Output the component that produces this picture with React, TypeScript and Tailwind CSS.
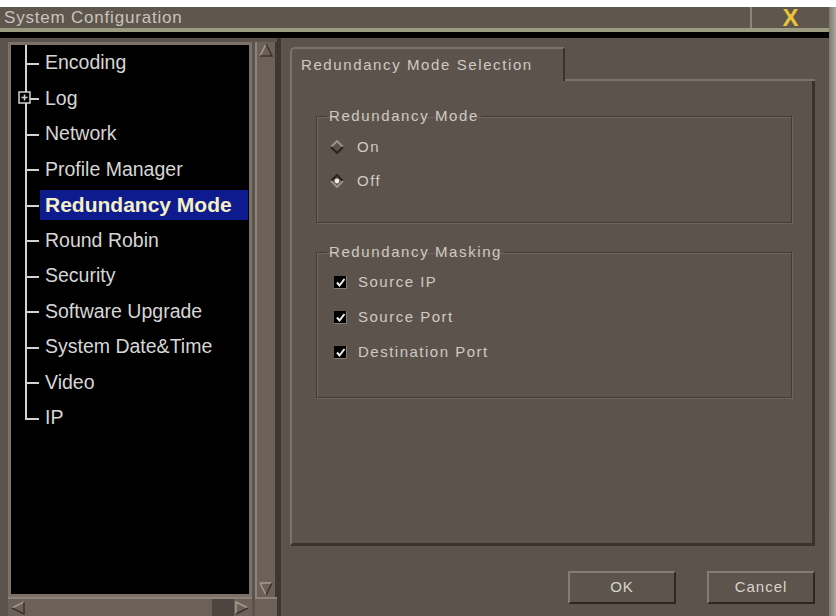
import React from "react";

const treeItems = [
  "Encoding",
  "Log",
  "Network",
  "Profile Manager",
  "Redundancy Mode",
  "Round Robin",
  "Security",
  "Software Upgrade",
  "System Date&Time",
  "Video",
  "IP",
];

const SELECTED = "Redundancy Mode";

function TreeRow({ label, last }: { label: string; last: boolean }) {
  const selected = label === SELECTED;
  return (
    <div className="flex items-center h-[35.5px]">
      <div className="relative w-[29px] h-full shrink-0">
        <span
          className={`absolute left-[14px] top-0 w-[2px] bg-[#d2d2d2] ${last ? "h-1/2" : "h-full"}`}
        />
        <span className="absolute left-[14px] top-1/2 w-[14px] h-[2px] bg-[#d2d2d2]" />
        {label === "Log" && (
          <svg
            className="absolute left-[7px] top-1/2 -translate-y-1/2"
            width="14"
            height="14"
            viewBox="0 0 14 14"
          >
            <rect x="1" y="1" width="11" height="11" fill="#000" stroke="#d2d2d2" strokeWidth="1.5" />
            <path d="M3.5 6.5h6M6.5 3.5v6" stroke="#d2d2d2" strokeWidth="1.5" />
          </svg>
        )}
      </div>
      <div
        className={`flex-1 h-[30px] flex items-center pl-[5px] mr-[1px] whitespace-nowrap ${
          selected
            ? "bg-[#0d1b8f] text-[#f4f0c4] font-bold text-[21px]"
            : "text-[#d6d6d6] text-[19.5px]"
        }`}
      >
        {label}
      </div>
    </div>
  );
}

function ArrowUp() {
  return (
    <svg width="14" height="14" viewBox="0 0 14 14">
      <path d="M1 13 L7 1" stroke="#a59a90" strokeWidth="1.5" fill="none" />
      <path d="M7 1 L13 13 L1 13" stroke="#3b332d" strokeWidth="1.5" fill="none" />
    </svg>
  );
}

function ArrowDown() {
  return (
    <svg width="14" height="14" viewBox="0 0 14 14">
      <path d="M1 1 L13 1 M1 1 L7 13" stroke="#a59a90" strokeWidth="1.5" fill="none" />
      <path d="M7 13 L13 1" stroke="#3b332d" strokeWidth="1.5" fill="none" />
    </svg>
  );
}

function ArrowLeft() {
  return (
    <svg width="14" height="14" viewBox="0 0 14 14">
      <path d="M13 1 L1 7" stroke="#a59a90" strokeWidth="1.5" fill="none" />
      <path d="M1 7 L13 13 L13 1" stroke="#3b332d" strokeWidth="1.5" fill="none" />
    </svg>
  );
}

function ArrowRight() {
  return (
    <svg width="14" height="14" viewBox="0 0 14 14">
      <path d="M1 13 L1 1 L13 7" stroke="#a59a90" strokeWidth="1.5" fill="none" />
      <path d="M13 7 L1 13" stroke="#3b332d" strokeWidth="1.5" fill="none" />
    </svg>
  );
}

function Diamond({ checked }: { checked: boolean }) {
  const top = checked ? "#2a231e" : "#9c9187";
  const bottom = checked ? "#9c9187" : "#2a231e";
  return (
    <svg width="14" height="14" viewBox="0 0 14 14">
      <path d="M1 7 L7 1 L13 7" stroke={top} strokeWidth="2" fill="none" />
      <path d="M1 7 L7 13 L13 7" stroke={bottom} strokeWidth="2" fill="none" />
      {checked && <circle cx="7" cy="7" r="2.4" fill="#ecebe6" />}
    </svg>
  );
}

function CheckBox() {
  return (
    <span className="w-[13px] h-[13px] bg-black border-r border-b border-[#847a71] flex items-center justify-center">
      <svg width="11" height="11" viewBox="0 0 11 11">
        <path d="M2 5.5 L4.5 8.5 L9.5 2" stroke="#f2f2f2" strokeWidth="2" fill="none" />
      </svg>
    </span>
  );
}

function Group({
  title,
  height,
  children,
}: {
  title: string;
  height: string;
  children: React.ReactNode;
}) {
  return (
    <fieldset
      className={`border border-[#443b35] shadow-[1px_1px_0_#6f655c,inset_1px_1px_0_#6f655c] ${height}`}
    >
      <legend className="ml-[10px] px-[2px] text-[15px] leading-[18px] tracking-[1.6px] text-[#cfcac2]">
        {title}
      </legend>
      {children}
    </fieldset>
  );
}

function DialogButton({ label }: { label: string }) {
  return (
    <button className="w-[108px] h-[33px] border-2 border-t-[#877c72] border-l-[#877c72] border-r-[#2e2722] border-b-[#2e2722] bg-[#5d554d] text-[15px] tracking-[1px] text-[#d8d4cc]">
      {label}
    </button>
  );
}

export default function App() {
  return (
    <div className="w-[836px] h-[616px] overflow-hidden bg-white font-['Liberation_Sans',Arial,sans-serif]">
      <div className="h-[7px] bg-white" />
      <div className="flex h-[609px]">
        <div className="w-[829px] flex flex-col bg-[#5c544c]">
          {/* title bar */}
          <div className="h-[21px] flex bg-[#5f564e]">
            <div className="flex-1 pl-[4px] flex items-center text-[17px] tracking-[0.8px] text-[#c9c4bc]">
              System Configuration
            </div>
            <div className="w-[2px] bg-[#8b857a]" />
            <div className="w-[77px] flex items-center justify-center text-[24px] leading-none font-bold text-[#eac436]">
              X
            </div>
          </div>
          <div className="h-[4px] bg-[#9d9a82]" />
          <div className="h-[6px] bg-black" />

          <div className="flex flex-1 min-h-0">
            {/* navigation tree with scrollbars */}
            <div className="w-[277px] shrink-0 flex flex-col pt-[4px] pl-[8px]">
              <div className="flex h-[555px]">
                <div className="w-[244px] h-full border-[3px] border-[#7b7168] bg-black overflow-hidden">
                  {treeItems.map((item, i) => (
                    <TreeRow key={item} label={item} last={i === treeItems.length - 1} />
                  ))}
                </div>
                <div className="ml-[3px] w-[22px] h-full border-l-2 border-[#8d8379] border-r-2 border-r-[#3f3731] bg-[#6c6158] flex flex-col items-center justify-between py-[1px]">
                  <ArrowUp />
                  <ArrowDown />
                </div>
              </div>
              <div className="flex h-[19px]">
                <div className="w-[244px] h-full border-t-2 border-[#8d8379] bg-[#6c6158] flex items-center pl-[3px] pr-[2px]">
                  <ArrowLeft />
                  <div className="flex-1" />
                  <div className="w-[22px] h-full bg-[#4f4540]" />
                  <div className="w-[16px] flex justify-center">
                    <ArrowRight />
                  </div>
                </div>
                <div className="ml-[3px] w-[22px] h-full border-t-2 border-[#8d8379] bg-[#6c6158]" />
              </div>
            </div>

            <div className="w-[4px] bg-[#3e3630]" />

            {/* settings panel */}
            <div className="ml-[9px] w-[525px] flex flex-col pt-[9px]">
              <div className="flex h-[34px]">
                <div className="w-[275px] border-t-2 border-l-2 border-[#7d7268] border-r-2 border-r-[#3a322c] rounded-tl-[5px] flex items-center pl-[9px] text-[15px] tracking-[1.6px] text-[#cfcac2] whitespace-nowrap">
                  Redundancy Mode Selection
                </div>
                <div className="flex-1 border-b-2 border-[#7d7268]" />
              </div>
              <div className="h-[465px] border-l-2 border-[#7d7268] border-r-[3px] border-r-[#3a322c] border-b-[3px] border-b-[#3a322c] pt-[26px] pl-[24px] pr-[20px] flex flex-col gap-[20px]">
                <Group title="Redundancy Mode" height="h-[116px]">
                  <div className="pt-[5px]">
                    {[
                      { label: "On", checked: false },
                      { label: "Off", checked: true },
                    ].map((r) => (
                      <div key={r.label} className="h-[34px] flex items-center pl-[13px]">
                        <Diamond checked={r.checked} />
                        <span className="ml-[13px] text-[15px] tracking-[1.5px] text-[#cfcac2]">
                          {r.label}
                        </span>
                      </div>
                    ))}
                  </div>
                </Group>
                <Group title="Redundancy Masking" height="h-[155px]">
                  <div className="pt-[4px]">
                    {["Source IP", "Source Port", "Destination Port"].map((label) => (
                      <div key={label} className="h-[35px] flex items-center pl-[17px]">
                        <CheckBox />
                        <span className="ml-[11px] text-[15px] tracking-[1.5px] text-[#cfcac2]">
                          {label}
                        </span>
                      </div>
                    ))}
                  </div>
                </Group>
              </div>
              <div className="mt-[25px] flex justify-end gap-[31px]">
                <DialogButton label="OK" />
                <DialogButton label="Cancel" />
              </div>
            </div>
          </div>
        </div>
        <div className="flex-1 bg-gradient-to-r from-[#7f786e] to-[#b0aa9e]" />
      </div>
    </div>
  );
}
